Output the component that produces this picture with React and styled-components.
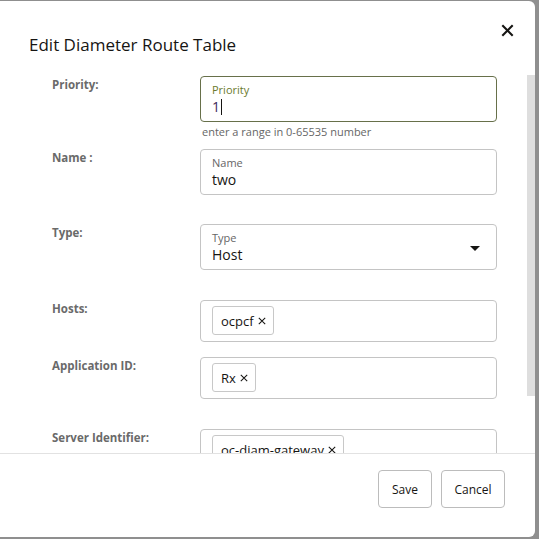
import React from "react";
import styled, { createGlobalStyle } from "styled-components";

const Global = createGlobalStyle`
  html, body { margin: 0; padding: 0; }
  body {
    background: #8f8f8f;
    font-family: "Open Sans", "Noto Sans", sans-serif;
    color: #161513;
    width: 539px;
    height: 539px;
    overflow: hidden;
  }
`;

const Dialog = styled.div`
  margin-top: 1px;
  width: 535px;
  height: 536px;
  background: #ffffff;
  border-radius: 0 6px 6px 0;
  display: flex;
  flex-direction: column;
  overflow: hidden;
`;

const Header = styled.div`
  height: 74px;
  flex: none;
  display: flex;
  justify-content: space-between;
  align-items: flex-start;
  padding: 0 20px 0 29px;
  box-sizing: border-box;
`;

const Title = styled.h1`
  margin: 32px 0 0;
  font-size: 17px;
  line-height: 24px;
  font-weight: 400;
  color: #161513;
`;

const CloseButton = styled.button`
  margin-top: 21px;
  width: 16px;
  height: 16px;
  padding: 0;
  border: none;
  background: transparent;
  display: flex;
  align-items: center;
  justify-content: center;
  cursor: pointer;
`;

const ScrollArea = styled.div`
  position: relative;
  flex: 1;
  min-height: 0;
  overflow: hidden;
`;

const ScrollThumb = styled.div`
  position: absolute;
  top: 0;
  right: 0;
  width: 8px;
  height: 321px;
  background: #dedede;
`;

const Body = styled.div`
  height: 100%;
  box-sizing: border-box;
  overflow: hidden;
  padding: 1px 0 0 52px;
`;

const Row = styled.div`
  display: grid;
  grid-template-columns: 148px 297px;
  padding-bottom: ${(p) => p.$gap}px;
`;

const RowLabel = styled.div`
  font-size: 11.5px;
  line-height: 16px;
  font-weight: 700;
  color: #6a6a6a;
  padding-top: 1px;
`;

const FieldBox = styled.div`
  box-sizing: border-box;
  height: 46px;
  border: 1px solid ${(p) => (p.$focused ? "#67704a" : "#c4c4c4")};
  border-radius: 4px;
  padding: 6px 11px 0;
  display: flex;
  align-items: flex-start;
  justify-content: space-between;
`;

const FieldText = styled.div`
  display: flex;
  flex-direction: column;
`;

const FloatLabel = styled.span`
  font-size: 11px;
  line-height: 14px;
  color: ${(p) => (p.$focused ? "#6b7a2d" : "#666666")};
`;

const Value = styled.span`
  font-size: 14px;
  line-height: 20px;
  color: ${(p) => (p.$focused ? "#3d2b5a" : "#161513")};
  display: flex;
  align-items: center;
`;

const Caret = styled.span`
  display: inline-block;
  width: 1px;
  height: 16px;
  margin-left: 1px;
  background: #161513;
`;

const Helper = styled.div`
  margin-top: 3px;
  padding-left: 2px;
  font-size: 11px;
  line-height: 14px;
  color: #666666;
`;

const SelectArrow = styled.span`
  margin-top: 15px;
  margin-right: 5px;
  width: 0;
  height: 0;
  border-left: 5px solid transparent;
  border-right: 5px solid transparent;
  border-top: 5px solid #161513;
`;

const ChipBox = styled.div`
  box-sizing: border-box;
  height: 42px;
  border: 1px solid #c4c4c4;
  border-radius: 4px;
  padding: 5px 11px;
  display: flex;
  gap: 6px;
`;

const Chip = styled.span`
  box-sizing: border-box;
  height: 29px;
  padding: 0 7px 0 8px;
  border: 1px solid #c8c8c8;
  border-radius: 3px;
  display: inline-flex;
  align-items: center;
  gap: 4px;
  font-size: 13px;
  color: #161513;
`;

const ChipX = styled.span`
  display: inline-flex;
  align-items: center;
`;

const Footer = styled.div`
  height: 84px;
  flex: none;
  box-sizing: border-box;
  border-top: 1px solid #e2e2e2;
  padding: 16px 30px 0 0;
  display: flex;
  justify-content: flex-end;
  align-items: flex-start;
  gap: 9px;
`;

const Button = styled.button`
  box-sizing: border-box;
  height: 38px;
  min-width: ${(p) => p.$w}px;
  padding: 0 12px;
  background: #ffffff;
  border: 1px solid #bcbcbc;
  border-radius: 4px;
  font-family: inherit;
  font-size: 12px;
  color: #161513;
  cursor: pointer;
`;

const XIcon = ({ size = 9, stroke = 1.5 }) => (
  <svg width={size} height={size} viewBox="0 0 10 10">
    <path d="M1 1 L9 9 M9 1 L1 9" stroke="#161513" strokeWidth={stroke} fill="none" />
  </svg>
);

const TextField = ({ label, value, focused, select }) => (
  <FieldBox $focused={focused}>
    <FieldText>
      <FloatLabel $focused={focused}>{label}</FloatLabel>
      <Value $focused={focused}>
        {value}
        {focused && <Caret />}
      </Value>
    </FieldText>
    {select && <SelectArrow />}
  </FieldBox>
);

const ChipField = ({ items }) => (
  <ChipBox>
    {items.map((it) => (
      <Chip key={it}>
        {it}
        <ChipX>
          <XIcon size={8} stroke={1.3} />
        </ChipX>
      </Chip>
    ))}
  </ChipBox>
);

export default function App() {
  return (
    <>
      <Global />
      <Dialog>
        <Header>
          <Title>Edit Diameter Route Table</Title>
          <CloseButton aria-label="Close">
            <XIcon size={13} stroke={1.6} />
          </CloseButton>
        </Header>
        <ScrollArea>
          <Body>
            <Row $gap={10}>
              <RowLabel>Priority:</RowLabel>
              <div>
                <TextField label="Priority" value="1" focused />
                <Helper>enter a range in 0-65535 number</Helper>
              </div>
            </Row>
            <Row $gap={29}>
              <RowLabel>Name :</RowLabel>
              <TextField label="Name" value="two" />
            </Row>
            <Row $gap={30}>
              <RowLabel>Type:</RowLabel>
              <TextField label="Type" value="Host" select />
            </Row>
            <Row $gap={15}>
              <RowLabel>Hosts:</RowLabel>
              <ChipField items={["ocpcf"]} />
            </Row>
            <Row $gap={30}>
              <RowLabel>Application ID:</RowLabel>
              <ChipField items={["Rx"]} />
            </Row>
            <Row $gap={50}>
              <RowLabel>Server Identifier:</RowLabel>
              <ChipField items={["oc-diam-gateway"]} />
            </Row>
          </Body>
          <ScrollThumb />
        </ScrollArea>
        <Footer>
          <Button $w={54}>Save</Button>
          <Button $w={64}>Cancel</Button>
        </Footer>
      </Dialog>
    </>
  );
}
